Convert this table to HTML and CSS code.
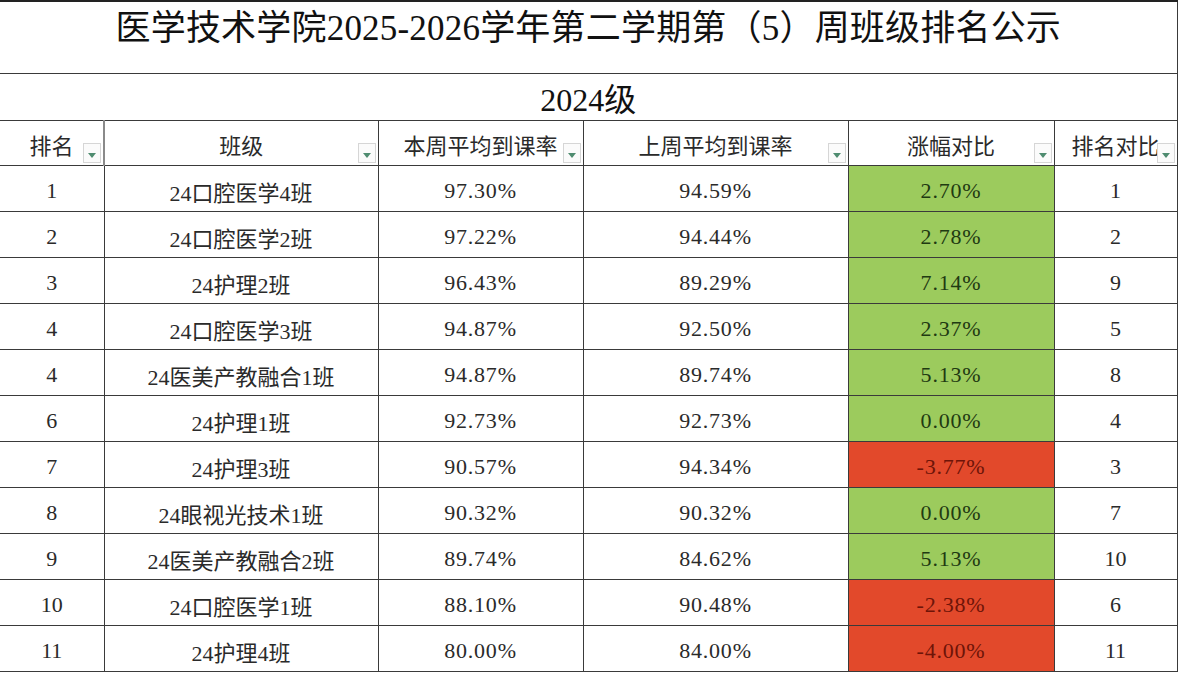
FILE: index.html
```html
<!DOCTYPE html>
<html lang="zh-CN">
<head>
<meta charset="utf-8">
<title>班级排名公示</title>
<link rel="stylesheet" href="styles.css">
</head>
<body>
<table class="sheet">
  <colgroup>
    <col class="c1"><col class="c2"><col class="c3"><col class="c4"><col class="c5"><col class="c6">
  </colgroup>
  <tr class="title-row"><td colspan="6" class="title">医学技术学院2025-2026学年第二学期第（5）周班级排名公示</td></tr>
  <tr class="sub-row"><td colspan="6" class="sub">2024级</td></tr>
  <tr class="head-row">
    <th><span class="ht">排名</span><span class="flt"></span></th>
    <th><span class="ht">班级</span><span class="flt"></span></th>
    <th><span class="ht">本周平均到课率</span><span class="flt"></span></th>
    <th><span class="ht">上周平均到课率</span><span class="flt"></span></th>
    <th><span class="ht">涨幅对比</span><span class="flt"></span></th>
    <th class="clip"><span class="ht">排名对比</span><span class="flt"></span></th>
  </tr>
  <tr class="row"><td>1</td><td>24口腔医学4班</td><td class="num">97.30%</td><td class="num">94.59%</td><td class="num up">2.70%</td><td>1</td></tr>
  <tr class="row"><td>2</td><td>24口腔医学2班</td><td class="num">97.22%</td><td class="num">94.44%</td><td class="num up">2.78%</td><td>2</td></tr>
  <tr class="row"><td>3</td><td>24护理2班</td><td class="num">96.43%</td><td class="num">89.29%</td><td class="num up">7.14%</td><td>9</td></tr>
  <tr class="row"><td>4</td><td>24口腔医学3班</td><td class="num">94.87%</td><td class="num">92.50%</td><td class="num up">2.37%</td><td>5</td></tr>
  <tr class="row"><td>4</td><td>24医美产教融合1班</td><td class="num">94.87%</td><td class="num">89.74%</td><td class="num up">5.13%</td><td>8</td></tr>
  <tr class="row"><td>6</td><td>24护理1班</td><td class="num">92.73%</td><td class="num">92.73%</td><td class="num up">0.00%</td><td>4</td></tr>
  <tr class="row"><td>7</td><td>24护理3班</td><td class="num">90.57%</td><td class="num">94.34%</td><td class="num down">-3.77%</td><td>3</td></tr>
  <tr class="row"><td>8</td><td>24眼视光技术1班</td><td class="num">90.32%</td><td class="num">90.32%</td><td class="num up">0.00%</td><td>7</td></tr>
  <tr class="row"><td>9</td><td>24医美产教融合2班</td><td class="num">89.74%</td><td class="num">84.62%</td><td class="num up">5.13%</td><td>10</td></tr>
  <tr class="row"><td>10</td><td>24口腔医学1班</td><td class="num">88.10%</td><td class="num">90.48%</td><td class="num down">-2.38%</td><td>6</td></tr>
  <tr class="row"><td>11</td><td>24护理4班</td><td class="num">80.00%</td><td class="num">84.00%</td><td class="num down">-4.00%</td><td>11</td></tr>
</table>
</body>
</html>
```
FILE: styles.css
```css
html, body {
  margin: 0;
  padding: 0;
  background: #ffffff;
}
body {
  font-family: "Liberation Serif", "Noto Sans CJK SC", serif;
  color: #1a1a1a;
  overflow: hidden;
}
.sheet {
  border-collapse: collapse;
  table-layout: fixed;
  width: 1177px;
  border-top: 2px solid #222;
}
.c1 { width: 104px; }
.c2 { width: 274px; }
.c3 { width: 205px; }
.c4 { width: 265px; }
.c5 { width: 206px; }
.c6 { width: 123px; }

.sheet td, .sheet th {
  border: 1px solid #3a3a3a;
  padding: 0;
  text-align: center;
  font-weight: normal;
  box-sizing: border-box;
}
.sheet td:first-child, .sheet th:first-child { border-left: none; }

.title-row { height: 72px; }
.title-row .title {
  vertical-align: top;
  font-size: 35px;
  line-height: 35px;
  padding-top: 9px;
  color: #111;
  letter-spacing: 0.2px;
}
.sub-row { height: 47px; }
.sub-row .sub {
  font-size: 32px;
  line-height: 32px;
  padding-top: 10px;
  vertical-align: top;
  color: #111;
}
.head-row { height: 45px; }
.head-row th {
  position: relative;
  font-size: 22px;
  color: #2a2a2a;
  overflow: hidden;
}
.head-row th:first-child { border-right-color: #8a8a8a; border-right-width: 2px; }
.ht {
  display: inline-block;
  padding-top: 3px;
  white-space: nowrap;
}
.flt {
  position: absolute;
  right: 2px;
  bottom: 2px;
  width: 18px;
  height: 20px;
  box-sizing: border-box;
  border: 1px solid #d6d6d6;
  background: #fbfbfb;
}
.flt::after {
  content: "";
  position: absolute;
  left: 4px;
  top: 9px;
  border-left: 4.5px solid transparent;
  border-right: 4.5px solid transparent;
  border-top: 5px solid #4f8c70;
}
.row { height: 46px; }
.row td {
  font-size: 22px;
  padding-top: 6px;
  color: #2a2a2a;
  white-space: nowrap;
}
.row .num { letter-spacing: 0.8px; }
.row .up {
  background: #9ccb5d;
  color: #1f3a12;
}
.row .down {
  background: #e2492b;
  color: #6e1408;
}
```
